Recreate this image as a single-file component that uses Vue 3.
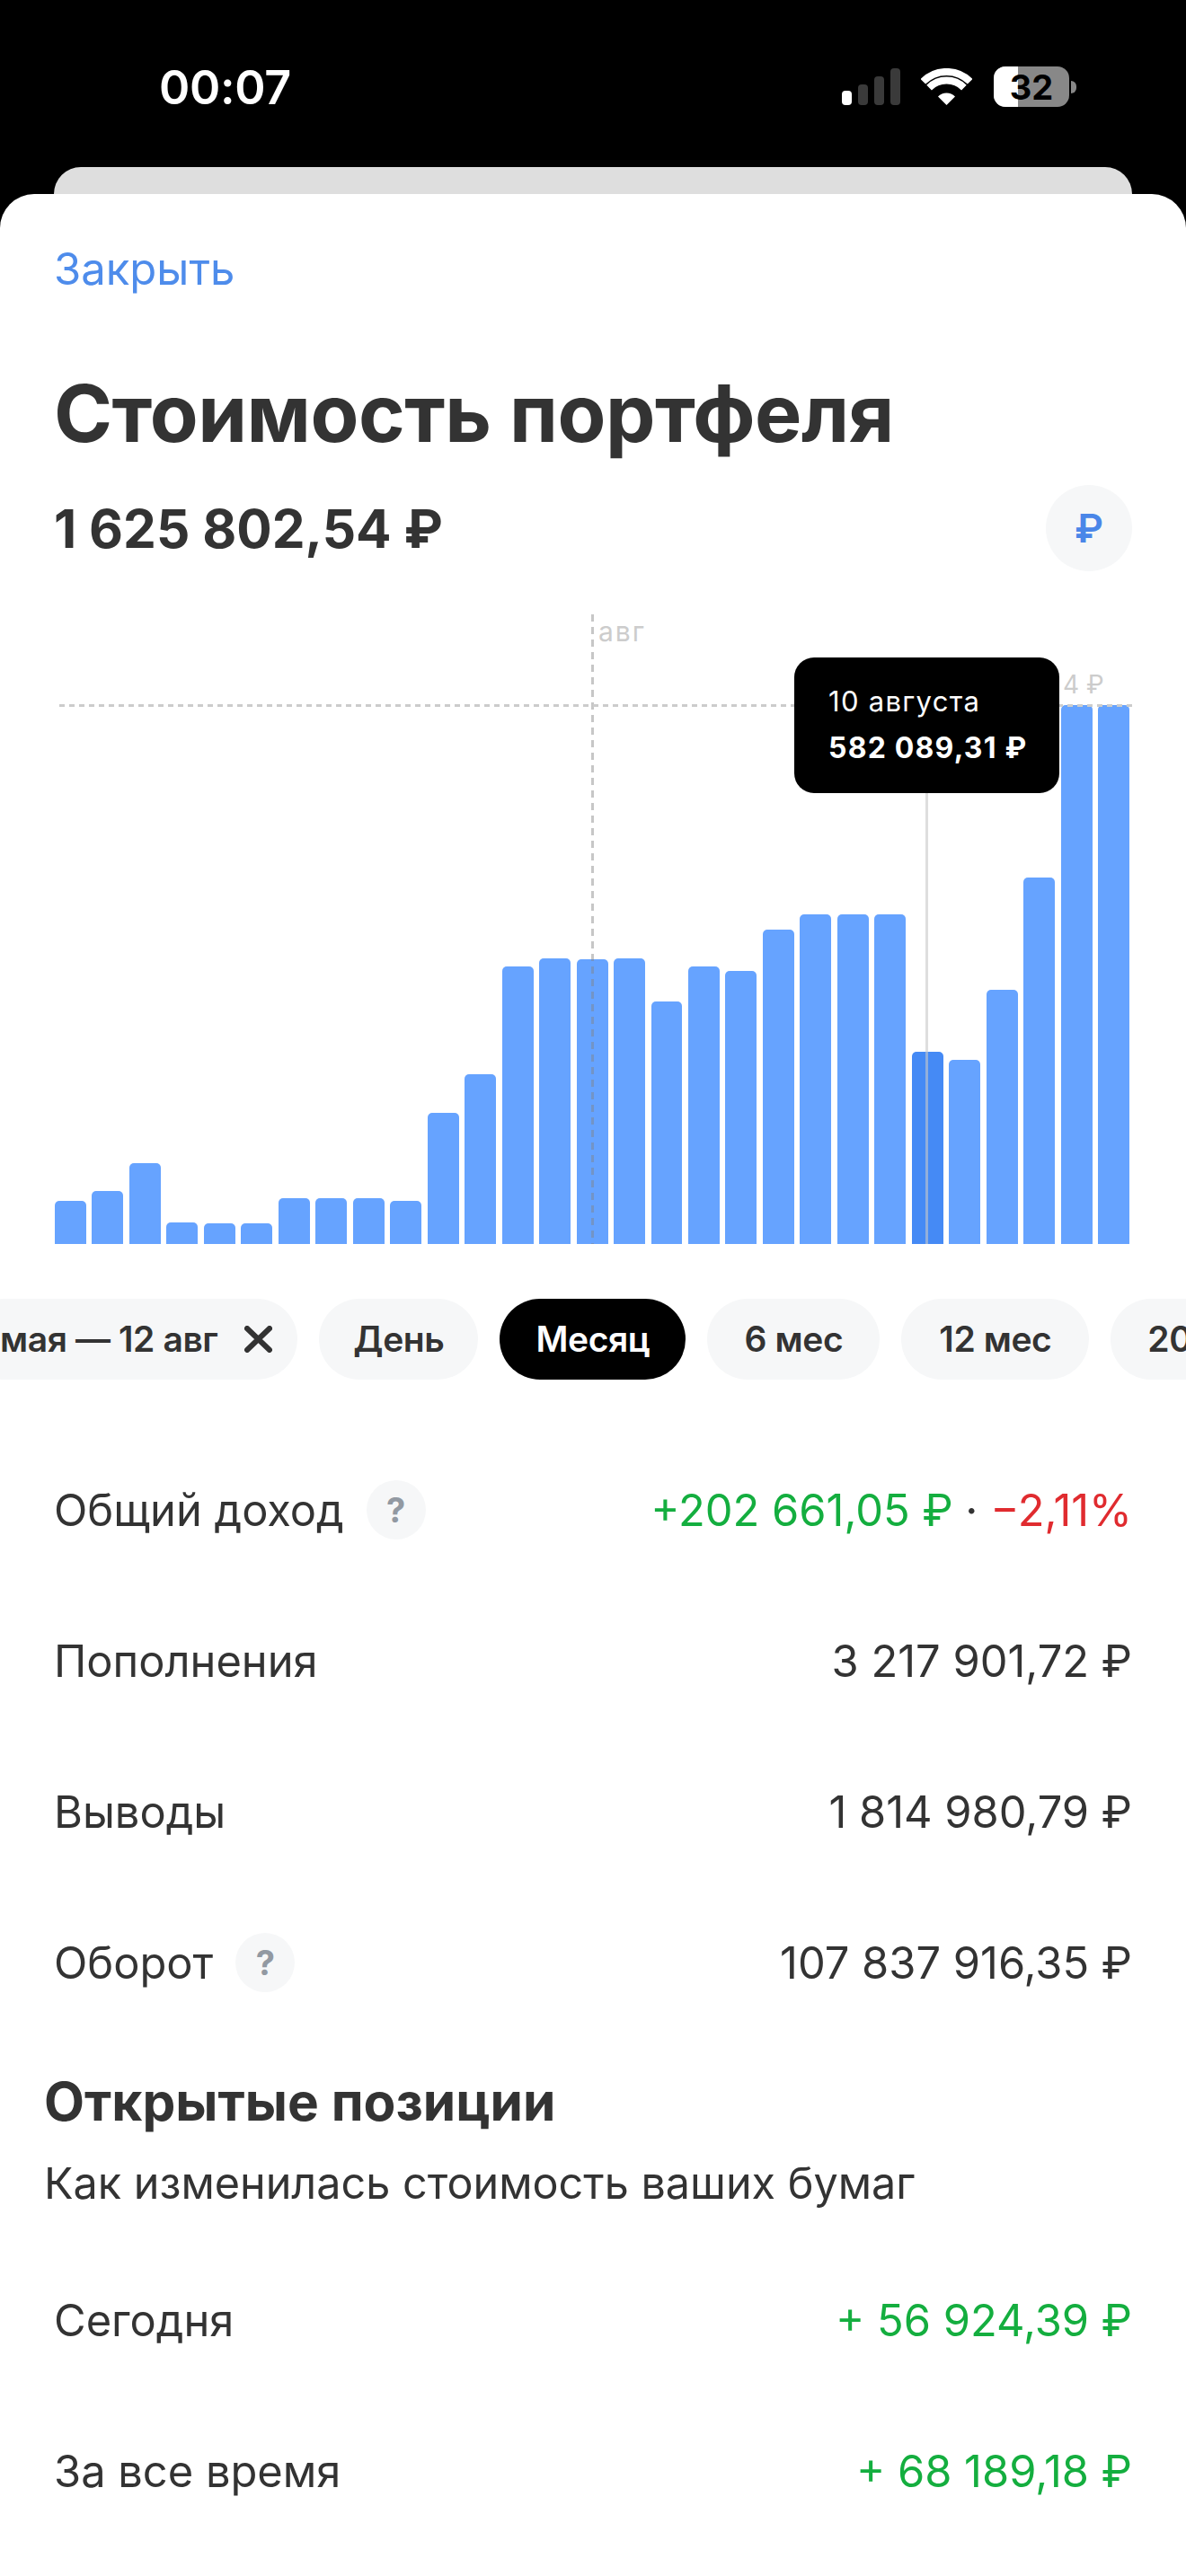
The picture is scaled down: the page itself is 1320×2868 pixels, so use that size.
<template>
  <div class="screen">
    <div class="status">
      <span class="time">00:07</span>
      <div class="status-icons">
        <div class="signal">
          <i v-for="(h, i) in signal" :key="i" :class="{ on: i === 0 }" :style="{ height: h + 'px' }"></i>
        </div>
        <svg class="wifi" width="57" height="41" viewBox="0 0 57 41">
          <path d="M2.3 14.8A37 37 0 0 1 54.7 14.8" fill="none" stroke="#fff" stroke-width="8" />
          <path d="M9.1 21.6A27.5 27.5 0 0 1 47.9 21.6" fill="none" stroke="#fff" stroke-width="8" />
          <path d="M28.5 41L19 31.5A13.5 13.5 0 0 1 38 31.5Z" fill="#fff" />
        </svg>
        <div class="battery">
          <div class="battery-body"><div class="battery-level"></div><span>32</span></div>
          <div class="battery-nub"></div>
        </div>
      </div>
    </div>
    <div class="back-card"></div>

    <div class="sheet">
      <div class="close">Закрыть</div>
      <h1 class="title">Стоимость портфеля</h1>
      <div class="amount-row">
        <span class="amount">1 625 802,54 ₽</span>
        <div class="currency">₽</div>
      </div>

      <div class="chart">
        <div class="bars">
          <div
            v-for="(h, i) in bars"
            :key="i"
            class="bar"
            :class="{ active: i === 23 }"
            :style="{ height: h + 'px' }"
          ></div>
        </div>
        <div class="month-line"></div>
        <span class="month-label">авг</span>
        <div class="max-line"></div>
        <span class="max-label">4 ₽</span>
        <div class="pointer"></div>
        <div class="tooltip">
          <div class="tooltip-date">10 августа</div>
          <div class="tooltip-value">582 089,31 ₽</div>
        </div>
      </div>

      <div class="chips">
        <div class="chip range">
          мая — 12 авг
          <svg width="31" height="30" viewBox="0 0 31 30">
            <path d="M3 3L28 27M28 3L3 27" stroke="#333" stroke-width="6" stroke-linecap="round" fill="none" />
          </svg>
        </div>
        <div
          v-for="c in chips"
          :key="c.name"
          class="chip"
          :class="{ selected: c.name === 'Месяц' }"
          :style="{ width: c.width + 'px' }"
        >{{ c.name }}</div>
      </div>

      <div class="rows">
        <div class="row">
          <div class="label">Общий доход <span class="hint">?</span></div>
          <div class="value"><span class="green">+202 661,05 ₽</span> <span class="dot">·</span> <span class="red">−2,11%</span></div>
        </div>
        <div class="row">
          <div class="label">Пополнения</div>
          <div class="value">3 217 901,72 ₽</div>
        </div>
        <div class="row">
          <div class="label">Выводы</div>
          <div class="value">1 814 980,79 ₽</div>
        </div>
        <div class="row">
          <div class="label">Оборот <span class="hint">?</span></div>
          <div class="value">107 837 916,35 ₽</div>
        </div>
      </div>

      <h2 class="section-title">Открытые позиции</h2>
      <p class="section-sub">Как изменилась стоимость ваших бумаг</p>

      <div class="rows positions">
        <div class="row">
          <div class="label">Сегодня</div>
          <div class="value green">+ 56 924,39 ₽</div>
        </div>
        <div class="row">
          <div class="label">За все время</div>
          <div class="value green">+ 68 189,18 ₽</div>
        </div>
      </div>
    </div>
  </div>
</template>

<script setup>
const signal = [16, 23, 32, 41]
const bars = [48, 59, 90, 24, 23, 23, 51, 51, 51, 48, 146, 189, 309, 318, 317, 318, 270, 309, 304, 350, 367, 367, 367, 214, 205, 283, 408, 600, 600]
const chips = [
  { name: 'День', width: 177 },
  { name: 'Месяц', width: 207 },
  { name: '6 мес', width: 192 },
  { name: '12 мес', width: 209 },
  { name: '2024', width: 180 }
]
</script>

<style>
html, body {
  background: #000;
}
</style>

<style scoped>
.screen {
  width: 1320px;
  height: 2868px;
  overflow: hidden;
  background: #000;
  font-family: Inter, "Liberation Sans", sans-serif;
  color: #333;
}

.status {
  height: 186px;
  position: relative;
  display: flex;
  justify-content: space-between;
}

.time {
  margin: 67px 0 0 177px;
  font-size: 52px;
  line-height: 62px;
  font-weight: 600;
  color: #fff;
  letter-spacing: -0.3px;
}

.status-icons {
  display: flex;
  align-items: flex-start;
  margin: 74px 122px 0 0;
}

.signal {
  display: flex;
  align-items: flex-end;
  gap: 7.3px;
  height: 43px;
  margin-right: 23px;
}

.signal i {
  display: block;
  width: 10.7px;
  border-radius: 4px;
  background: #3a3a3a;
}

.signal i.on {
  background: #fff;
}

.wifi {
  margin: 2px 24px 0 0;
}

.battery {
  display: flex;
  align-items: center;
  gap: 2px;
}

.battery-body {
  position: relative;
  width: 84px;
  height: 45px;
  border-radius: 13px;
  overflow: hidden;
  background: #888;
  display: flex;
  align-items: center;
  justify-content: center;
}

.battery-level {
  position: absolute;
  left: 0;
  top: 0;
  bottom: 0;
  width: 27px;
  background: #fff;
}

.battery-body span {
  position: relative;
  font-size: 38px;
  font-weight: 700;
  color: #000;
}

.battery-nub {
  width: 6px;
  height: 14px;
  border-radius: 0 7px 7px 0;
  background: #888;
}

.back-card {
  height: 60px;
  margin: 0 60px -30px;
  border-radius: 30px 30px 0 0;
  background: #dedede;
}

.sheet {
  position: relative;
  height: 2652px;
  padding: 56px 60px 0;
  box-sizing: border-box;
  border-radius: 38px 38px 0 0;
  background: #fff;
}

.close {
  font-size: 49px;
  line-height: 56px;
  color: #4e8ceb;
}

.title {
  margin: 82px 0 0;
  font-size: 88px;
  line-height: 100px;
  font-weight: 700;
  letter-spacing: -0.5px;
}

.amount-row {
  margin-top: 30px;
  height: 96px;
  display: flex;
  align-items: center;
  justify-content: space-between;
}

.amount {
  font-size: 58.5px;
  font-weight: 700;
}

.currency {
  width: 96px;
  height: 96px;
  border-radius: 50%;
  background: #f6f7f8;
  color: #4a86e8;
  font-size: 44px;
  font-weight: 600;
  display: flex;
  align-items: center;
  justify-content: center;
}

.chart {
  position: relative;
  margin-top: 48px;
  height: 701px;
}

.bars {
  position: absolute;
  left: 1px;
  width: 1196px;
  bottom: 0;
  display: flex;
  align-items: flex-end;
  gap: 6.5px;
}

.bar {
  flex: 1;
  border-radius: 5px 5px 0 0;
  background: #66a3ff;
}

.bar.active {
  background: #458af5;
}

.month-line {
  position: absolute;
  left: 598px;
  top: 0;
  bottom: 0;
  width: 3px;
  background: repeating-linear-gradient(to bottom, rgba(130, 130, 130, 0.45) 0 8px, transparent 8px 14px);
}

.month-label {
  position: absolute;
  left: 606px;
  top: 1px;
  font-size: 30px;
  line-height: 36px;
  letter-spacing: 2px;
  color: #ccc;
}

.max-line {
  position: absolute;
  left: 6px;
  right: 0;
  top: 100px;
  height: 3px;
  background: repeating-linear-gradient(to right, #ccc 0 6px, transparent 6px 11px);
}

.max-label {
  position: absolute;
  left: 1123px;
  top: 60px;
  font-size: 28px;
  line-height: 36px;
  color: #ccc;
}

.pointer {
  position: absolute;
  left: 970px;
  top: 190px;
  bottom: 0;
  width: 3px;
  background: rgba(200, 200, 200, 0.6);
}

.tooltip {
  position: absolute;
  left: 824px;
  top: 48px;
  width: 295px;
  height: 151px;
  padding: 28px 0 0 38px;
  box-sizing: border-box;
  border-radius: 22px;
  background: #000;
  color: #fff;
}

.tooltip-date {
  font-size: 31px;
  line-height: 42px;
  letter-spacing: 1.3px;
}

.tooltip-value {
  margin-top: 10px;
  font-size: 32px;
  line-height: 42px;
  font-weight: 700;
  letter-spacing: 1.2px;
}

.chips {
  display: flex;
  gap: 24px;
  margin: 61px -60px 0;
  height: 90px;
  overflow: hidden;
}

.chip {
  flex: none;
  height: 90px;
  box-sizing: border-box;
  text-align: center;
  border-radius: 45px;
  background: #f6f7f8;
  font-size: 39px;
  font-weight: 600;
  line-height: 90px;
  letter-spacing: -0.4px;
  white-space: nowrap;
}

.chip.range {
  display: flex;
  align-items: center;
  gap: 30px;
  margin-left: -40px;
  padding: 0 28px 0 40px;
}

.chip.selected {
  background: #000;
  color: #fff;
}

.rows {
  margin-top: 61px;
}

.row {
  height: 168px;
  display: flex;
  align-items: center;
  justify-content: space-between;
  font-size: 48.8px;
}

.label {
  display: flex;
  align-items: center;
  gap: 25px;
}

.hint {
  width: 66px;
  height: 66px;
  border-radius: 50%;
  background: #f6f7f8;
  color: #9299a2;
  font-size: 38px;
  font-weight: 700;
  display: flex;
  align-items: center;
  justify-content: center;
}

.green {
  color: #14ae3f;
}

.red {
  color: #e02b2f;
}

.section-title {
  margin: 36px 0 0 -11px;
  font-size: 58.5px;
  line-height: 70px;
  font-weight: 700;
}

.section-sub {
  margin: 26px 0 0 -11px;
  font-size: 48.5px;
  line-height: 60px;
}

.rows.positions {
  margin-top: 38px;
}
</style>
